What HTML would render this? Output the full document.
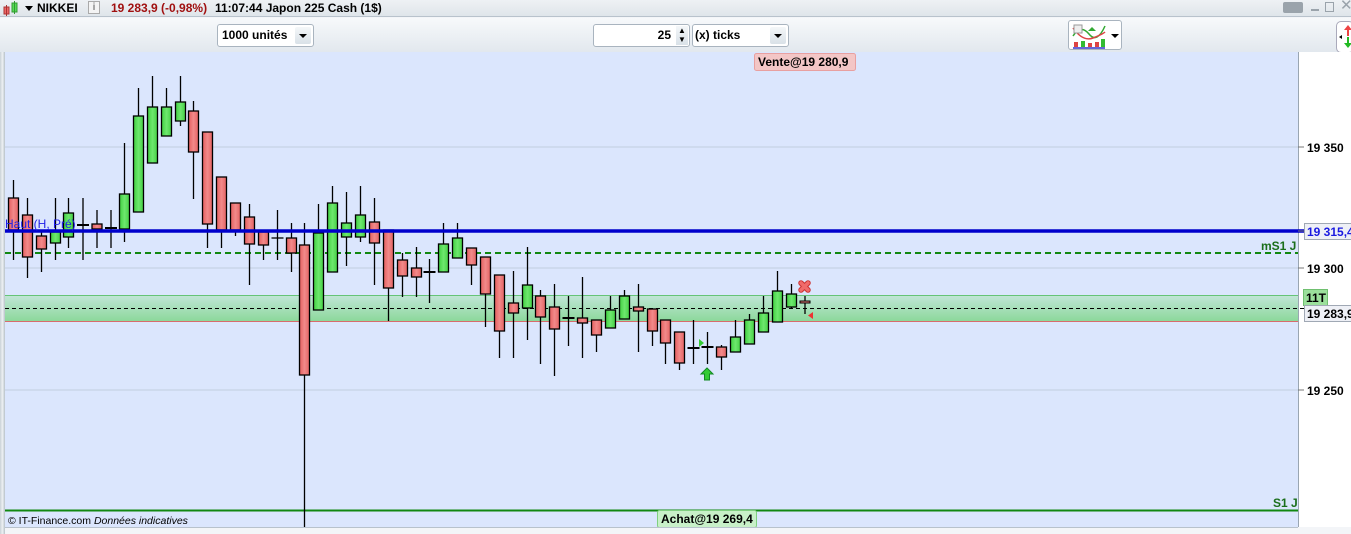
<!DOCTYPE html>
<html><head><meta charset="utf-8"><style>
*{margin:0;padding:0;box-sizing:border-box}
body{width:1351px;height:534px;overflow:hidden;background:#f3f5f8;font-family:"Liberation Sans",Arial,sans-serif;position:relative}
.abs{position:absolute}
#top{left:0;top:0;width:1351px;height:17px;background:linear-gradient(#eef1f4,#dfe5ea);border-bottom:1px solid #b8c2cc;font-size:12px;font-weight:bold;line-height:14px}
#tb{left:0;top:18px;width:1351px;height:34px;background:linear-gradient(#f7f9fb,#e2e8ee)}
.box{position:absolute;background:#fff;border:1px solid #a9b4bf;border-radius:3px;font-size:12px;font-weight:bold;line-height:20px}
.dd{position:absolute;top:2px;width:16px;height:17px;background:linear-gradient(#f4f7f9,#d9e1e8);border-radius:2px}
.dd:after{content:"";position:absolute;left:4px;top:7px;border-left:4px solid transparent;border-right:4px solid transparent;border-top:4px solid #000}
</style></head><body>
<div id="top" class="abs">
 <svg class="abs" style="left:3px;top:1px" width="16" height="15"><rect x="1" y="6" width="5" height="7" fill="#e66" stroke="#a33"/><line x1="3.5" y1="4" x2="3.5" y2="15" stroke="#a33"/><rect x="9" y="2" width="5" height="9" fill="#5d5" stroke="#393"/><line x1="11.5" y1="0" x2="11.5" y2="13" stroke="#393"/></svg>
 <div class="abs" style="left:25px;top:6px;border-left:4px solid transparent;border-right:4px solid transparent;border-top:5px solid #000"></div>
 <span class="abs" style="left:37px;top:1px">NIKKEI</span>
 <div class="abs" style="left:88px;top:1px;width:12px;height:13px;border:1px solid #aaa;background:#f4f4f4;font-size:10px;color:#888;text-align:center;line-height:11px">i</div>
 <span class="abs" style="left:111px;top:1px;color:#a01010">19 283,9 (-0,98%)</span>
 <span class="abs" style="left:215px;top:1px">11:07:44 Japon 225 Cash (1$)</span>
 <div class="abs" style="left:1283px;top:2px;width:20px;height:11px;background:#9aa3ab;border-radius:2px"></div>
 <div class="abs" style="left:1311px;top:9px;width:8px;height:2px;background:#9aa3ab"></div>
 <div class="abs" style="left:1325px;top:2px;width:9px;height:10px;border:1.5px solid #9aa3ab"></div>
 <span class="abs" style="left:1340px;top:-1px;color:#9aa3ab;font-size:15px;font-weight:normal">✕</span>
</div>
<div id="tb" class="abs">
 <div class="box" style="left:217px;top:6px;width:97px;height:23px"><span style="padding-left:4px">1000 unités</span><div class="dd" style="left:77px"></div></div>
 <div class="box" style="left:593px;top:6px;width:97px;height:23px"><span class="abs" style="right:18px;top:0">25</span><div class="abs" style="left:82px;top:1px;width:12px;height:19px;background:linear-gradient(#f4f7f9,#d9e1e8);font-size:8px;line-height:9px;text-align:center">▲<br>▼</div></div>
 <div class="box" style="left:692px;top:6px;width:97px;height:23px"><span style="padding-left:2px">(x) ticks</span><div class="dd" style="left:77px"></div></div>
 <div class="box" style="left:1068px;top:2px;width:54px;height:30px;background:#fff">
  <svg width="36" height="28" style="position:absolute;left:2px;top:1px"><path d="M2 14 Q10 2 18 12 T34 4" fill="none" stroke="#3a3" stroke-width="1.5"/><path d="M2 6 Q12 20 22 16 T34 10" fill="none" stroke="#d44" stroke-width="1.5"/><rect x="3" y="3" width="8" height="8" fill="#eee" stroke="#999"/><rect x="3" y="20" width="4" height="5" fill="#d44"/><rect x="10" y="19" width="4" height="6" fill="#3b3"/><rect x="17" y="21" width="4" height="4" fill="#d44"/><rect x="24" y="20" width="4" height="5" fill="#d44"/><rect x="30" y="17" width="4" height="8" fill="#3b3"/><line x1="2" y1="26" x2="34" y2="26" stroke="#33c" stroke-width="1.5"/><path d="M17 9 l4-4 4 4z" fill="#3a3"/></svg>
  <div class="dd" style="left:38px;top:6px;background:none"></div>
 </div>
 <div class="abs" style="left:1336px;top:3px;width:18px;height:32px;border:1px solid #aab;border-radius:5px;background:#fff"></div>
 <svg class="abs" style="left:1338px;top:6px" width="13" height="26"><path d="M1 13 l3-2 v4z" fill="#000"/><path d="M9 12 v-6 h-3 l4-5 4 5 h-3 v6z" fill="#e44"/><path d="M9 13 v6 h-3 l4 5 4-5 h-3 v-6z" fill="#2b2"/></svg>
</div>
<div class="abs" style="left:0;top:52px;width:5px;height:482px;background:linear-gradient(90deg,#c9d1d6,#eef1f3,#b7c1c8)"></div>
<div class="abs" style="left:1299px;top:52px;width:52px;height:475px;background:#fff"></div>
<svg class="abs" style="left:0;top:0" width="1351" height="534">
 <defs>
  <linearGradient id="r" x1="0" x2="1"><stop offset="0" stop-color="#e45e5e"/><stop offset=".5" stop-color="#f28a8a"/><stop offset="1" stop-color="#e46262"/></linearGradient>
  <linearGradient id="g" x1="0" x2="1"><stop offset="0" stop-color="#3fcf3f"/><stop offset=".5" stop-color="#6ee86e"/><stop offset="1" stop-color="#44d044"/></linearGradient>
  <linearGradient id="band" x1="0" y1="0" x2="0" y2="1"><stop offset="0" stop-color="#c2e6d8"/><stop offset="1" stop-color="#8cd89b"/></linearGradient>
 </defs>
 <rect x="5" y="52" width="1293" height="475" fill="#dbe6fd"/>
 <line x1="1298.5" y1="52" x2="1298.5" y2="527" stroke="#9aa6b2"/>
 <line x1="5" y1="147" x2="1304" y2="147" stroke="#c2cde0"/>
 <line x1="5" y1="268" x2="1304" y2="268" stroke="#c2cde0"/>
 <line x1="5" y1="390" x2="1304" y2="390" stroke="#c2cde0"/>
 <rect x="5" y="295" width="1293" height="26" fill="url(#band)"/>
 <line x1="5" y1="295.5" x2="1298" y2="295.5" stroke="#66c477"/>
 <line x1="5" y1="321.5" x2="1298" y2="321.5" stroke="#d86c6c"/>
 <line x1="5" y1="308.5" x2="1304" y2="308.5" stroke="#000" stroke-dasharray="4,3"/>
 <line x1="5" y1="253" x2="1298" y2="253" stroke="#118811" stroke-width="2" stroke-dasharray="6,4"/>
 <line x1="5" y1="510.5" x2="1298" y2="510.5" stroke="#118811" stroke-width="2"/>
 <g stroke="#000" stroke-width="1.3">
 <line x1="13.5" y1="180" x2="13.5" y2="260"/><rect x="8.5" y="198" width="10" height="32" fill="url(#r)"/>
 <line x1="27.5" y1="198" x2="27.5" y2="278"/><rect x="22.5" y="215" width="10" height="42" fill="url(#r)"/>
 <line x1="41.5" y1="232" x2="41.5" y2="272"/><rect x="36.5" y="236" width="10" height="13" fill="url(#r)"/>
 <line x1="55.5" y1="198" x2="55.5" y2="260"/><rect x="50.5" y="232" width="10" height="11" fill="url(#g)"/>
 <line x1="68.5" y1="198" x2="68.5" y2="248"/><rect x="63.5" y="213" width="10" height="24" fill="url(#g)"/>
 <line x1="83" y1="198" x2="83" y2="260"/><line x1="77" y1="225" x2="89" y2="225" stroke-width="2"/>
 <line x1="97" y1="210" x2="97" y2="248"/><rect x="92" y="224" width="10" height="5" fill="url(#r)"/>
 <line x1="111" y1="210" x2="111" y2="248"/><line x1="105" y1="228" x2="117" y2="228" stroke-width="2"/>
 <line x1="124.5" y1="143" x2="124.5" y2="242"/><rect x="119.5" y="194" width="10" height="35" fill="url(#g)"/>
 <line x1="138.5" y1="88" x2="138.5" y2="212"/><rect x="133.5" y="116" width="10" height="96" fill="url(#g)"/>
 <line x1="152.5" y1="76" x2="152.5" y2="163"/><rect x="147.5" y="107" width="10" height="56" fill="url(#g)"/>
 <line x1="166.5" y1="88" x2="166.5" y2="136"/><rect x="161.5" y="107" width="10" height="29" fill="url(#g)"/>
 <line x1="180.5" y1="76" x2="180.5" y2="126"/><rect x="175.5" y="102" width="10" height="19" fill="url(#g)"/>
 <line x1="193.5" y1="101" x2="193.5" y2="199"/><rect x="188.5" y="111" width="10" height="41" fill="url(#r)"/>
 <line x1="207.5" y1="132" x2="207.5" y2="248"/><rect x="202.5" y="132" width="10" height="92" fill="url(#r)"/>
 <line x1="221.5" y1="177" x2="221.5" y2="248"/><rect x="216.5" y="177" width="10" height="53" fill="url(#r)"/>
 <line x1="235.5" y1="203" x2="235.5" y2="236"/><rect x="230.5" y="203" width="10" height="27" fill="url(#r)"/>
 <line x1="249.5" y1="204" x2="249.5" y2="285"/><rect x="244.5" y="217" width="10" height="27" fill="url(#r)"/>
 <line x1="263.5" y1="232" x2="263.5" y2="260"/><rect x="258.5" y="232" width="10" height="13" fill="url(#r)"/>
 <line x1="277.5" y1="210" x2="277.5" y2="260"/><line x1="271.5" y1="238" x2="283.5" y2="238"/>
 <line x1="291.5" y1="223" x2="291.5" y2="272"/><rect x="286.5" y="238" width="10" height="15" fill="url(#r)"/>
 <line x1="304.5" y1="223" x2="304.5" y2="527"/><rect x="299.5" y="245" width="10" height="130" fill="url(#r)"/>
 <line x1="318.5" y1="204" x2="318.5" y2="310"/><rect x="313.5" y="233" width="10" height="77" fill="url(#g)"/>
 <line x1="332.5" y1="186" x2="332.5" y2="272"/><rect x="327.5" y="203" width="10" height="69" fill="url(#g)"/>
 <line x1="346.5" y1="192" x2="346.5" y2="266"/><rect x="341.5" y="223" width="10" height="14" fill="url(#g)"/>
 <line x1="360.5" y1="186" x2="360.5" y2="242"/><rect x="355.5" y="215" width="10" height="22" fill="url(#g)"/>
 <line x1="374.5" y1="198" x2="374.5" y2="285"/><rect x="369.5" y="222" width="10" height="21" fill="url(#r)"/>
 <line x1="388.5" y1="230" x2="388.5" y2="321"/><rect x="383.5" y="230" width="10" height="58" fill="url(#r)"/>
 <line x1="402.5" y1="253" x2="402.5" y2="297"/><rect x="397.5" y="260" width="10" height="16" fill="url(#r)"/>
 <line x1="416.5" y1="247" x2="416.5" y2="297"/><rect x="411.5" y="268" width="10" height="9" fill="url(#r)"/>
 <line x1="429.5" y1="259" x2="429.5" y2="303"/><line x1="423.5" y1="272" x2="435.5" y2="272" stroke-width="2"/>
 <line x1="443.5" y1="223" x2="443.5" y2="272"/><rect x="438.5" y="244" width="10" height="28" fill="url(#g)"/>
 <line x1="457.5" y1="223" x2="457.5" y2="258"/><rect x="452.5" y="238" width="10" height="20" fill="url(#g)"/>
 <line x1="471.5" y1="248" x2="471.5" y2="285"/><rect x="466.5" y="248" width="10" height="17" fill="url(#r)"/>
 <line x1="485.5" y1="257" x2="485.5" y2="327"/><rect x="480.5" y="257" width="10" height="37" fill="url(#r)"/>
 <line x1="499.5" y1="275" x2="499.5" y2="358"/><rect x="494.5" y="275" width="10" height="56" fill="url(#r)"/>
 <line x1="513.5" y1="271" x2="513.5" y2="358"/><rect x="508.5" y="303" width="10" height="10" fill="url(#r)"/>
 <line x1="527.5" y1="247" x2="527.5" y2="340"/><rect x="522.5" y="285" width="10" height="23" fill="url(#g)"/>
 <line x1="540.5" y1="290" x2="540.5" y2="364"/><rect x="535.5" y="296" width="10" height="21" fill="url(#r)"/>
 <line x1="554.5" y1="284" x2="554.5" y2="376"/><rect x="549.5" y="307" width="10" height="22" fill="url(#r)"/>
 <line x1="568.5" y1="296" x2="568.5" y2="346"/><line x1="562.5" y1="318" x2="574.5" y2="318" stroke-width="2"/>
 <line x1="582.5" y1="277" x2="582.5" y2="358"/><rect x="577.5" y="318" width="10" height="5" fill="url(#r)"/>
 <line x1="596.5" y1="320" x2="596.5" y2="352"/><rect x="591.5" y="320" width="10" height="15" fill="url(#r)"/>
 <line x1="610.5" y1="296" x2="610.5" y2="328"/><rect x="605.5" y="310" width="10" height="18" fill="url(#g)"/>
 <line x1="624.5" y1="290" x2="624.5" y2="319"/><rect x="619.5" y="296" width="10" height="23" fill="url(#g)"/>
 <line x1="638.5" y1="284" x2="638.5" y2="352"/><rect x="633.5" y="307" width="10" height="4" fill="url(#r)"/>
 <line x1="652.5" y1="309" x2="652.5" y2="346"/><rect x="647.5" y="309" width="10" height="22" fill="url(#r)"/>
 <line x1="665.5" y1="320" x2="665.5" y2="364"/><rect x="660.5" y="320" width="10" height="23" fill="url(#r)"/>
 <line x1="679.5" y1="332" x2="679.5" y2="370"/><rect x="674.5" y="332" width="10" height="31" fill="url(#r)"/>
 <line x1="693.5" y1="320" x2="693.5" y2="364"/><line x1="687.5" y1="348" x2="699.5" y2="348" stroke-width="2"/>
 <line x1="707.5" y1="332" x2="707.5" y2="364"/><line x1="701.5" y1="347" x2="713.5" y2="347" stroke-width="2"/>
 <line x1="721.5" y1="345" x2="721.5" y2="370"/><rect x="716.5" y="347" width="10" height="10" fill="url(#r)"/>
 <line x1="735.5" y1="320" x2="735.5" y2="352"/><rect x="730.5" y="337" width="10" height="15" fill="url(#g)"/>
 <line x1="749.5" y1="314" x2="749.5" y2="344"/><rect x="744.5" y="320" width="10" height="24" fill="url(#g)"/>
 <line x1="763.5" y1="296" x2="763.5" y2="332"/><rect x="758.5" y="313" width="10" height="19" fill="url(#g)"/>
 <line x1="777.5" y1="271" x2="777.5" y2="322"/><rect x="772.5" y="291" width="10" height="31" fill="url(#g)"/>
 <line x1="791.5" y1="284" x2="791.5" y2="308"/><rect x="786.5" y="294" width="10" height="13" fill="url(#g)"/>
 <line x1="805" y1="296" x2="805" y2="314"/><rect x="800" y="301" width="10" height="2" fill="url(#r)" stroke-width="1"/>
 </g>
 <line x1="5" y1="231" x2="1304" y2="231" stroke="#0000cc" stroke-width="3.5"/>
 <text x="5" y="228" font-family="Liberation Sans" font-size="12" fill="#2020e8">Haut (H, Pré)</text>
 <g stroke-linecap="round"><path d="M801 283 L808 290 M808 283 L801 290" stroke="#c33" stroke-width="5.5"/><path d="M801 283 L808 290 M808 283 L801 290" stroke="#f06a6a" stroke-width="3.5"/></g>
 <path d="M813 312 v7 l-5-3.5z" fill="#e33"/>
 <path d="M699 339 v8 l5-4z" fill="#3c3"/>
 <path d="M707 368 l-6 6 h3.5 v6 h5 v-6 h3.5z" fill="#3c3" stroke="#182" stroke-width="1"/>
 <rect x="754.5" y="53.5" width="101" height="17" fill="#f3c6c6" stroke="#e8a0a0" rx="2"/>
 <text x="758" y="66" font-family="Liberation Sans" font-size="12" font-weight="bold">Vente@19 280,9</text>
 <rect x="657.5" y="510.5" width="99" height="17" fill="#c8f0c8" stroke="#80d080" rx="2"/>
 <text x="661" y="523" font-family="Liberation Sans" font-size="12" font-weight="bold">Achat@19 269,4</text>
 <text x="8" y="524" font-family="Liberation Sans" font-size="10.5">© IT-Finance.com <tspan font-style="italic">Données indicatives</tspan></text>
 <g font-family="Liberation Sans" font-size="12" font-weight="bold" fill="#1a6e1a"><text x="1261" y="250">mS1 J</text><text x="1273" y="507">S1 J</text></g>
 <g stroke="#777"><line x1="1298" y1="147" x2="1304" y2="147"/><line x1="1298" y1="268" x2="1304" y2="268"/><line x1="1298" y1="390" x2="1304" y2="390"/><line x1="1298" y1="231" x2="1304" y2="231"/></g>
 <g font-family="Liberation Sans" font-size="12" font-weight="bold"><text x="1307" y="152">19 350</text><text x="1307" y="273">19 300</text><text x="1307" y="395">19 250</text>
 <rect x="1304.5" y="223.5" width="52" height="16" fill="#eef0f6" stroke="#a0a8b4"/><text x="1307" y="236" fill="#1a1ae0">19 315,4</text>
 <rect x="1303.5" y="289.5" width="24" height="16" fill="#9ce09c" stroke="#70c070"/><text x="1306" y="302">11T</text>
 <rect x="1304.5" y="305.5" width="52" height="16" fill="#eef0f6" stroke="#a0a8b4"/><text x="1307" y="318">19 283,9</text>
 <text x="1307" y="540">19 200</text></g>
 <rect x="5" y="527" width="1346" height="7" fill="#f3f5f8"/>
 <line x1="5" y1="527.5" x2="1298" y2="527.5" stroke="#b8c2cc"/>
</svg>
</body></html>
